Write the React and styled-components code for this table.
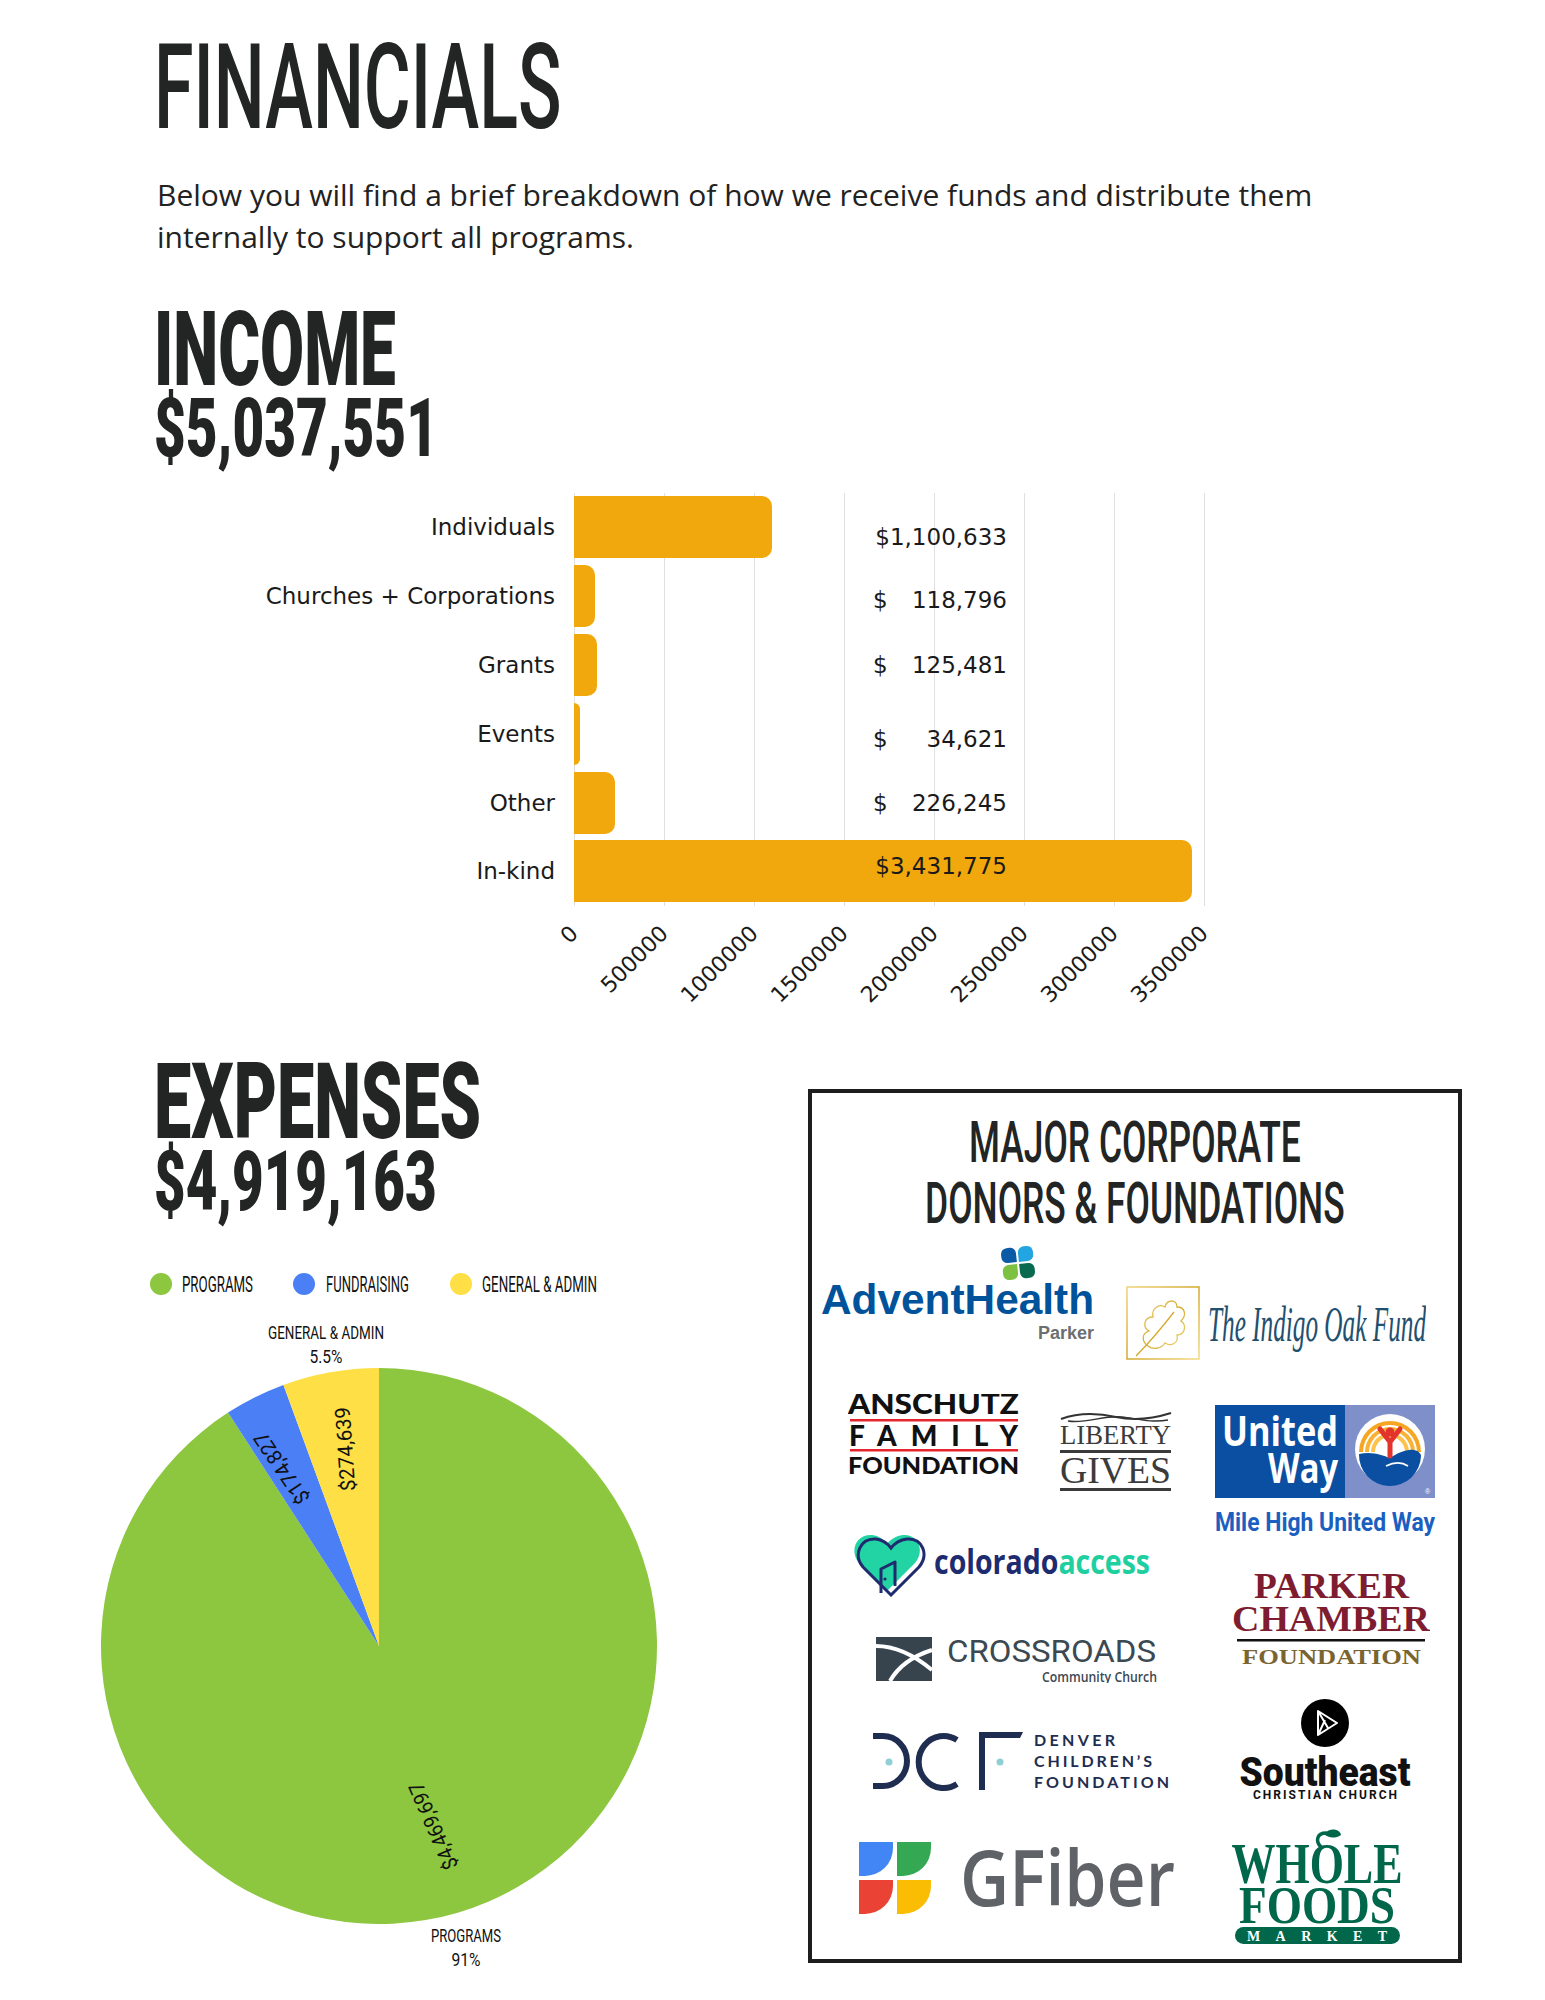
import React from 'react'
import styled, { createGlobalStyle } from 'styled-components'

const GlobalStyle = createGlobalStyle`
  html, body {
    margin: 0;
    padding: 0;
    background: #fff;
  }
  body {
    font-family: "Open Sans", "Liberation Sans", sans-serif;
    color: #222;
  }
`

const ink = '#222524'

const income = [
  { label: 'Individuals', value: 1100633, shown: '$1,100,633', shift: 10 },
  { label: 'Churches + Corporations', value: 118796, shown: '118,796', shift: 4 },
  { label: 'Grants', value: 125481, shown: '125,481', shift: 0 },
  { label: 'Events', value: 34621, shown: '34,621', shift: 5 },
  { label: 'Other', value: 226245, shown: '226,245', shift: 0 },
  { label: 'In-kind', value: 3431775, shown: '$3,431,775', shift: -5 },
]
const ticks = [0, 500000, 1000000, 1500000, 2000000, 2500000, 3000000, 3500000]
const axisMax = 3500000
const plotWidth = 630

const expenses = [
  { name: 'PROGRAMS', value: 4469697, color: '#8dc63f' },
  { name: 'FUNDRAISING', value: 174827, color: '#4a7ff5' },
  { name: 'GENERAL & ADMIN', value: 274639, color: '#ffdf46' },
]

const Page = styled.div`
  width: 1545px;
  padding-top: 29px;
`

const Top = styled.section`
  padding-left: 157px;
`

const Display = styled.h1`
  margin: ${p => p.$mt || 0}px 0 0 -3px;
  font-family: Roboto, "Liberation Sans", sans-serif;
  font-weight: ${p => p.$weight || 900};
  font-size: ${p => p.$size}px;
  line-height: ${p => p.$lh || 1};
  color: ${ink};
  white-space: nowrap;
  transform: scaleX(${p => p.$sx || 0.6});
  transform-origin: left center;
`

const Intro = styled.p`
  margin: 27px 0 0;
  width: 1200px;
  font-size: 30px;
  font-weight: 500;
  line-height: 42px;
  color: #222;
`

const Chart = styled.div`
  display: grid;
  grid-template-columns: 398px 631px;
  column-gap: 19px;
  margin-top: 29px;
`

const LabelCol = styled.div`
  display: flex;
  flex-direction: column;
`

const chartFont = `font-family: "DejaVu Sans", Verdana, sans-serif; color: #1a1a1a;`

const CatLabel = styled.div`
  height: 68.8px;
  display: flex;
  align-items: center;
  justify-content: flex-end;
  font-size: 23px;
  ${chartFont}
`

const Plot = styled.div`
  position: relative;
  display: flex;
  flex-direction: column;
  background: repeating-linear-gradient(to right, #e0e0e0 0 1px, transparent 1px 90px);
`

const BarRow = styled.div`
  position: relative;
  height: 68.8px;
  display: flex;
  align-items: center;
`

const Bar = styled.div`
  height: 62px;
  background: #f0a80c;
  border-radius: 0 10px 10px 0;
`

const Amount = styled.div`
  position: absolute;
  left: 299px;
  width: 134px;
  top: calc(50% + ${p => p.$shift}px);
  transform: translateY(-50%);
  display: flex;
  justify-content: space-between;
  font-size: 23px;
  ${chartFont}
`

const TickRow = styled.div`
  grid-column: 2;
  display: flex;
  margin: 10px 0 0 -45px;
  height: 142px;
`

const Tick = styled.div`
  flex: none;
  width: 90px;
  box-sizing: border-box;
  padding-right: 45px;
  display: flex;
  justify-content: flex-end;
  align-items: flex-start;
`

const TickText = styled.span`
  white-space: nowrap;
  line-height: 27px;
  font-size: 22px;
  ${chartFont}
  transform: rotate(-45deg);
  transform-origin: right center;
`

const Bottom = styled.section`
  display: flex;
  align-items: flex-start;
  padding-left: 80px;
`

const LeftCol = styled.div`
  width: 728px;
`

const HeadBlock = styled.div`
  padding-left: 77px;
`

const PieSvg = styled.svg`
  display: block;
  margin-top: 46px;
`

const DonorBox = styled.div`
  width: 654px;
  height: 874px;
  box-sizing: border-box;
  margin-top: 31px;
  border: 4px solid #1e1e1e;
  padding-top: 19px;
`

const TitleWrap = styled.div`
  display: flex;
  justify-content: center;
`

const DonorTitle = styled.h2`
  flex: none;
  margin: 0;
  text-align: center;
  white-space: nowrap;
  font-family: Roboto, "Liberation Sans", sans-serif;
  font-weight: 500;
  font-size: 58px;
  line-height: 61px;
  color: ${ink};
  transform: scaleX(0.61);
  transform-origin: center;
`

const LogoRow = styled.div`
  display: flex;
  align-items: flex-start;
  gap: 32px;
  margin-top: 12px;
  padding-left: 9px;
`

const LogoColumns = styled.div`
  display: grid;
  grid-template-columns: 383px 263px;
  margin-top: 26px;
`

const LogoStack = styled.div`
  display: flex;
  flex-direction: column;
  align-items: flex-start;
`

const Slot = styled.div`
  display: flex;
  align-items: flex-start;
  gap: ${p => p.$gap || 0}px;
  margin-top: ${p => p.$mt || 0}px;
  margin-left: ${p => p.$ml || 0}px;
  svg { display: block; flex: none; }
`

/* ---------- income ---------- */

const IncomeChart = () => (
  <Chart>
    <LabelCol>
      {income.map(d => <CatLabel key={d.label}>{d.label}</CatLabel>)}
    </LabelCol>
    <Plot>
      {income.map(d => (
        <BarRow key={d.label}>
          <Bar style={{ width: (d.value / axisMax) * plotWidth }} />
          <Amount $shift={d.shift}>
            {d.shown.startsWith('$')
              ? <span style={{ marginLeft: 'auto' }}>{d.shown}</span>
              : <><span>$</span><span>{d.shown}</span></>}
          </Amount>
        </BarRow>
      ))}
    </Plot>
    <TickRow>
      {ticks.map(t => <Tick key={t}><TickText>{t}</TickText></Tick>)}
    </TickRow>
  </Chart>
)

/* ---------- expenses pie ---------- */

const slicePath = (cx, cy, r, a0, a1) => {
  const pt = a => [cx + r * Math.sin(a * Math.PI / 180), cy - r * Math.cos(a * Math.PI / 180)]
  const [x0, y0] = pt(a0)
  const [x1, y1] = pt(a1)
  return `M${cx} ${cy} L${x0} ${y0} A${r} ${r} 0 ${a1 - a0 > 180 ? 1 : 0} 1 ${x1} ${y1} Z`
}

const ExpensePie = () => {
  const total = expenses.reduce((s, d) => s + d.value, 0)
  let start = 0
  const arcs = expenses.map(d => {
    const end = start + (d.value / total) * 360
    const a = { ...d, a0: start, a1: end }
    start = end
    return a
  })
  const legend = [
    { x: 81, tx: 102, w: 71 },
    { x: 224, tx: 246, w: 83 },
    { x: 381, tx: 402, w: 115 },
  ]
  const values = [
    { text: '$4,469,697', x: 353.5, y: 562, rot: -113.5, w: 93 },
    { text: '$174,827', x: 202, y: 204, rot: -124, w: 82 },
    { text: '$274,639', x: 265.5, y: 185, rot: -94, w: 84 },
  ]
  const f = { fontFamily: 'Roboto, "Liberation Sans", sans-serif', fill: '#111' }
  return (
    <PieSvg width="600" height="712" viewBox="0 0 600 712">
      {arcs.map((d, i) => (
        <g key={d.name}>
          <circle cx={legend[i].x} cy="20" r="11" fill={d.color} />
          <text x={legend[i].tx} y="28" fontSize="22" textLength={legend[i].w} lengthAdjust="spacingAndGlyphs" {...f}>{d.name}</text>
        </g>
      ))}
      {arcs.map(d => (
        <path key={d.name} d={slicePath(299, 382, 278, d.a0, d.a1)} fill={d.color} />
      ))}
      {values.map(v => (
        <text key={v.text} transform={`translate(${v.x} ${v.y}) rotate(${v.rot})`} textAnchor="middle" dominantBaseline="central"
          fontSize="21" textLength={v.w} lengthAdjust="spacingAndGlyphs" {...f}>{v.text}</text>
      ))}
      <text x="246" y="75" textAnchor="middle" fontSize="19" textLength="116" lengthAdjust="spacingAndGlyphs" {...f}>GENERAL &amp; ADMIN</text>
      <text x="246" y="99" textAnchor="middle" fontSize="19" textLength="33" lengthAdjust="spacingAndGlyphs" {...f}>5.5%</text>
      <text x="386" y="678" textAnchor="middle" fontSize="19" textLength="70" lengthAdjust="spacingAndGlyphs" {...f}>PROGRAMS</text>
      <text x="386" y="702" textAnchor="middle" fontSize="19" textLength="29" lengthAdjust="spacingAndGlyphs" {...f}>91%</text>
    </PieSvg>
  )
}

/* ---------- logos ---------- */

const fit = (w) => ({ textLength: w, lengthAdjust: 'spacingAndGlyphs' })
const spread = (w) => ({ textLength: w, lengthAdjust: 'spacing' })

const leaf = 'M15 15 H6 A6 6 0 0 1 0 9 V6 A6 6 0 0 1 6 0 H9 A6 6 0 0 1 15 6 Z'

const AdventHealth = () => (
  <svg width="273" height="95" viewBox="0 0 273 95">
    <g transform="translate(197 17) rotate(-6)">
      <path d={leaf} transform="translate(-16 -16)" fill="#0b5aa6" />
      <g transform="rotate(90)"><path d={leaf} transform="translate(-16 -16)" fill="#22a5e0" /></g>
      <g transform="rotate(180)"><path d={leaf} transform="translate(-16 -16)" fill="#0a6a50" /></g>
      <g transform="rotate(270)"><path d={leaf} transform="translate(-16 -16)" fill="#7cc142" /></g>
    </g>
    <text x="0" y="68" fontFamily='"Liberation Sans", Arial, sans-serif' fontWeight="700" fontSize="42" fill="#00539b" {...fit(273)}>AdventHealth</text>
    <text x="273" y="93" textAnchor="end" fontFamily='"Liberation Sans", Arial, sans-serif' fontWeight="700" fontSize="18" fill="#6d6e70">Parker</text>
  </svg>
)

const IndigoOak = () => (
  <svg width="300" height="84" viewBox="0 0 300 84">
    <defs>
      <linearGradient id="gold" x1="0" y1="0" x2="1" y2="1">
        <stop offset="0" stopColor="#f0d37a" />
        <stop offset="0.5" stopColor="#d4a82c" />
        <stop offset="1" stopColor="#f3d985" />
      </linearGradient>
    </defs>
    <rect x="1" y="3" width="72" height="72" fill="none" stroke="url(#gold)" strokeWidth="1.5" />
    <path d="M22 62 C15 57 16 49 23 47 C16 43 18 33 27 33 C25 25 33 19 39 23 C41 15 51 15 51 23 C59 23 61 31 55 37 C61 41 59 51 51 51 C53 59 45 63 39 59 C35 65 27 66 22 62 Z"
      fill="none" stroke="url(#gold)" strokeWidth="1.3" />
    <path d="M10 72 C22 60 34 46 48 28" fill="none" stroke="url(#gold)" strokeWidth="1.3" />
    <text x="82" y="57" fontFamily='"Liberation Serif", serif' fontStyle="italic" fontSize="50" fill="#22506e" {...fit(218)}>The Indigo Oak Fund</text>
  </svg>
)

const Anschutz = () => {
  const f = { fontFamily: 'Lato, "Liberation Sans", sans-serif', fontWeight: 900, fill: '#111' }
  return (
    <svg width="171" height="81" viewBox="0 0 171 81">
      <text x="0" y="20" fontSize="28" {...f} {...fit(171)}>ANSCHUTZ</text>
      <rect x="2" y="25" width="168" height="2.5" fill="#e4252b" />
      <text x="1" y="52" fontSize="28" {...f} {...spread(169)}>FAMILY</text>
      <rect x="2" y="55" width="168" height="2.5" fill="#e4252b" />
      <text x="0" y="80" fontSize="22" {...f} {...fit(171)}>FOUNDATION</text>
    </svg>
  )
}

const LibertyGives = () => {
  const f = { fontFamily: '"Liberation Serif", serif', fill: '#3b3b3b' }
  return (
    <svg width="112" height="80" viewBox="0 0 112 80">
      <path d="M1 8 C20 1 38 2 56 6 C74 10 92 8 111 2" fill="none" stroke="#333" strokeWidth="2" />
      <path d="M8 10 C26 13 44 4 62 6 C78 8 92 12 108 9" fill="none" stroke="#333" strokeWidth="1.4" />
      <text x="0" y="33" fontSize="27" {...f} {...fit(111)}>LIBERTY</text>
      <rect x="0" y="39" width="111" height="3" fill="#3b3b3b" />
      <text x="0" y="72" fontSize="38" {...f} {...fit(111)}>GIVES</text>
      <rect x="0" y="77" width="111" height="3" fill="#3b3b3b" />
    </svg>
  )
}

const UnitedWay = () => {
  const f = { fontFamily: '"Open Sans", "Liberation Sans", sans-serif', fontWeight: 700, fill: '#fff' }
  const half = r => `M${-r} 0 A${r} ${r} 0 0 1 ${r} 0 Z`
  return (
    <svg width="220" height="93" viewBox="0 0 220 93">
      <rect width="130" height="93" fill="#0b4fa2" />
      <rect x="130" width="90" height="93" fill="#7e8fc9" />
      <text x="7" y="41" fontSize="42" {...f} {...fit(116)}>United</text>
      <text x="123" y="78" textAnchor="end" fontSize="42" {...f} {...fit(70)}>Way</text>
      <g transform="translate(175 44)">
        <circle r="35" fill="#fff" />
        <g transform="translate(0 3)">
          <path d={half(31)} fill="#f6a623" />
          <path d={half(27)} fill="#fff" />
          <path d={half(25)} fill="#f9b233" />
          <path d={half(21)} fill="#fff" />
          <path d={half(19)} fill="#fcc24b" />
          <path d={half(15)} fill="#fff" />
        </g>
        <path d="M-31 5 C-18 2 -8 6 0 9 C8 4 16 0 24 1 C29 2 31 5 31 7 A31 31 0 0 1 -31 5 Z" fill="#0b4fa2" />
        <path d="M-4 17 C4 13 12 13 18 17" fill="none" stroke="#fff" strokeWidth="1.6" />
        <circle cx="0" cy="-17" r="4.5" fill="#e2342a" />
        <path d="M-10 -20 L0 -7 L10 -20 M0 -7 V7" fill="none" stroke="#e2342a" strokeWidth="5" strokeLinecap="round" strokeLinejoin="round" />
      </g>
      <text x="210" y="89" fontSize="7" fill="#fff" fontFamily="sans-serif">®</text>
    </svg>
  )
}

const MileHigh = () => (
  <svg width="220" height="30" viewBox="0 0 220 30">
    <text x="0" y="23" fontFamily='Roboto, "Liberation Sans", sans-serif' fontWeight="700" fontSize="26" fill="#1b60c0" {...fit(220)}>Mile High United Way</text>
  </svg>
)

const ColoradoAccess = () => (
  <svg width="298" height="66" viewBox="0 0 298 66">
    <path d="M34 60 L6 32 C-4 20 3 3 19 4 C27 5 31 9 34 13 C37 9 42 5 50 4 C66 3 72 20 62 32 Z" fill="#22d3a4" />
    <path d="M38 64 L10 36 C0 24 7 7 23 8 C31 9 35 13 38 17 C41 13 46 9 54 8 C70 7 76 24 66 36 Z" fill="none" stroke="#1e2b6e" strokeWidth="3" />
    <path d="M28 62 V38 L42 31 V55" fill="none" stroke="#1e2b6e" strokeWidth="3" strokeLinejoin="round" />
    <circle cx="32" cy="48" r="1.6" fill="#1e2b6e" />
    <text x="81" y="43" fontFamily='"Open Sans", sans-serif' fontWeight="700" fontSize="34" {...fit(216)}>
      <tspan fill="#1e2b6e">colorado</tspan><tspan fill="#1fcf9f">access</tspan>
    </text>
  </svg>
)

const ParkerChamber = () => {
  const f = { fontFamily: '"Liberation Serif", serif', fontWeight: 700 }
  return (
    <svg width="198" height="92" viewBox="0 0 198 92">
      <text x="22" y="24" fontSize="36" fill="#7d1d2f" {...f} {...fit(155)}>PARKER</text>
      <text x="0" y="57" fontSize="36" fill="#7d1d2f" {...f} {...fit(198)}>CHAMBER</text>
      <rect x="5" y="65" width="188" height="2.5" fill="#111" />
      <text x="10" y="90" fontSize="22" fill="#7a6530" {...f} {...fit(179)}>FOUNDATION</text>
    </svg>
  )
}

const Crossroads = () => (
  <svg width="282" height="46" viewBox="0 0 282 46">
    <rect width="56" height="44" fill="#37444e" />
    <path d="M0 9 C18 9 38 18 56 33" fill="none" stroke="#fff" strokeWidth="4" />
    <path d="M14 44 C22 30 34 20 56 13" fill="none" stroke="#fff" strokeWidth="4" />
    <text x="71" y="25" fontFamily='Roboto, "Liberation Sans", sans-serif' fontWeight="400" fontSize="32" fill="#3b4952" {...fit(209)}>CROSSROADS</text>
    <text x="281" y="45" textAnchor="end" fontFamily='"Open Sans", sans-serif' fontWeight="600" fontSize="15" fill="#3b4952" {...fit(115)}>Community Church</text>
  </svg>
)

const DenverChildrens = () => {
  const f = { fontFamily: 'Lato, "Liberation Sans", sans-serif', fontWeight: 700, fontSize: 16, fill: '#1f2d50' }
  return (
    <svg width="296" height="60" viewBox="0 0 296 60">
      <path d="M0 4 H10 A24 25 0 0 1 10 54 H0" fill="none" stroke="#1f2d50" strokeWidth="6" />
      <circle cx="16" cy="30" r="3.5" fill="#8fcfd6" />
      <path d="M84 8 A25 26 0 1 0 84 52" fill="none" stroke="#1f2d50" strokeWidth="6" />
      <path d="M106 0 H150 L147 6 H112 V58 H106 Z" fill="#1f2d50" />
      <circle cx="127" cy="30" r="3.5" fill="#8fcfd6" />
      <text x="161" y="14" {...f} {...spread(81)}>DENVER</text>
      <text x="161" y="35" {...f} {...spread(118)}>CHILDREN’S</text>
      <text x="161" y="56" {...f} {...spread(135)}>FOUNDATION</text>
    </svg>
  )
}

const Southeast = () => (
  <svg width="172" height="102" viewBox="0 0 172 102">
    <circle cx="86" cy="24" r="24" fill="#000" />
    <path d="M79 12 L98 24 L79 36 Z M79 12 L89 29 M79 36 L86 21" fill="none" stroke="#fff" strokeWidth="2" strokeLinejoin="round" />
    <text x="86" y="87" textAnchor="middle" fontFamily='Roboto, "Liberation Sans", sans-serif' fontWeight="900" fontSize="40" fill="#111" {...fit(171)}>Southeast</text>
    <text x="86" y="100" textAnchor="middle" fontFamily='Roboto, "Liberation Sans", sans-serif' fontWeight="700" fontSize="12" fill="#111" {...spread(144)}>CHRISTIAN CHURCH</text>
  </svg>
)

const petal = 'M0 0 H34 V6 A28 28 0 0 1 6 34 H0 Z'

const GFiber = () => (
  <svg width="316" height="72" viewBox="0 0 316 72">
    <path d={petal} fill="#4285f4" />
    <path d={petal} transform="translate(38 0)" fill="#34a853" />
    <path d={petal} transform="translate(0 38)" fill="#ea4335" />
    <path d={petal} transform="translate(38 38)" fill="#fbbc04" />
    <text x="101" y="64" fontFamily='"Open Sans", sans-serif' fontWeight="600" fontSize="77" fill="#5f6368" {...fit(215)}>GFiber</text>
  </svg>
)

const WholeFoods = () => {
  const f = { fontFamily: '"Liberation Serif", serif', fontWeight: 700, fill: '#00674b' }
  return (
    <svg width="172" height="118" viewBox="0 0 172 118">
      <path d="M90 19 C84 13 86 5 95 5" fill="none" stroke="#00674b" strokeWidth="3.5" strokeLinecap="round" />
      <path d="M93 6 C99 -1 109 1 110 7 C104 11 97 10 93 6 Z" fill="#00674b" />
      <text x="86" y="55" textAnchor="middle" fontSize="56" {...f} {...fit(171)}>WHOLE</text>
      <text x="86" y="95" textAnchor="middle" fontSize="53" {...f} {...fit(156)}>FOODS</text>
      <rect x="4" y="99" width="165" height="17" rx="8.5" fill="#00674b" />
      <text x="86" y="113" textAnchor="middle" fontFamily='"Liberation Serif", serif' fontWeight="700" fontSize="14" fill="#fff" {...spread(140)}>MARKET</text>
    </svg>
  )
}

const Donors = () => (
  <DonorBox>
    <TitleWrap>
      <DonorTitle>MAJOR CORPORATE<br />DONORS &amp; FOUNDATIONS</DonorTitle>
    </TitleWrap>
    <LogoRow>
      <Slot><AdventHealth /></Slot>
      <Slot $mt={38}><IndigoOak /></Slot>
    </LogoRow>
    <LogoColumns>
      <LogoStack>
        <Slot $ml={36} $gap={41}>
          <Anschutz />
          <Slot $mt={17}><LibertyGives /></Slot>
        </Slot>
        <Slot $ml={41} $mt={40}><ColoradoAccess /></Slot>
        <Slot $ml={64} $mt={40}><Crossroads /></Slot>
        <Slot $ml={61} $mt={49}><DenverChildrens /></Slot>
        <Slot $ml={47} $mt={50}><GFiber /></Slot>
      </LogoStack>
      <LogoStack>
        <Slot $ml={20} $mt={11}><UnitedWay /></Slot>
        <Slot $ml={20} $mt={10}><MileHigh /></Slot>
        <Slot $ml={37} $mt={36}><ParkerChamber /></Slot>
        <Slot $ml={44} $mt={33}><Southeast /></Slot>
        <Slot $ml={36} $mt={27}><WholeFoods /></Slot>
      </LogoStack>
    </LogoColumns>
  </DonorBox>
)

const App = () => (
  <Page>
    <GlobalStyle />
    <Top>
      <Display $size={118} $weight={500} $sx={0.608}>FINANCIALS</Display>
      <Intro>
        Below you will find a brief breakdown of how we receive funds and distribute them internally to support all programs.
      </Intro>
      <Display $size={104} $lh={0.85} $sx={0.614} $mt={48}>INCOME</Display>
      <Display $size={82} $lh={0.85} $sx={0.669}>$5,037,551</Display>
      <IncomeChart />
    </Top>
    <Bottom>
      <LeftCol>
        <HeadBlock>
          <Display $size={105} $lh={0.85} $sx={0.633}>EXPENSES</Display>
          <Display $size={83} $lh={0.85} $sx={0.658}>$4,919,163</Display>
        </HeadBlock>
        <ExpensePie />
      </LeftCol>
      <Donors />
    </Bottom>
  </Page>
)

export default App
